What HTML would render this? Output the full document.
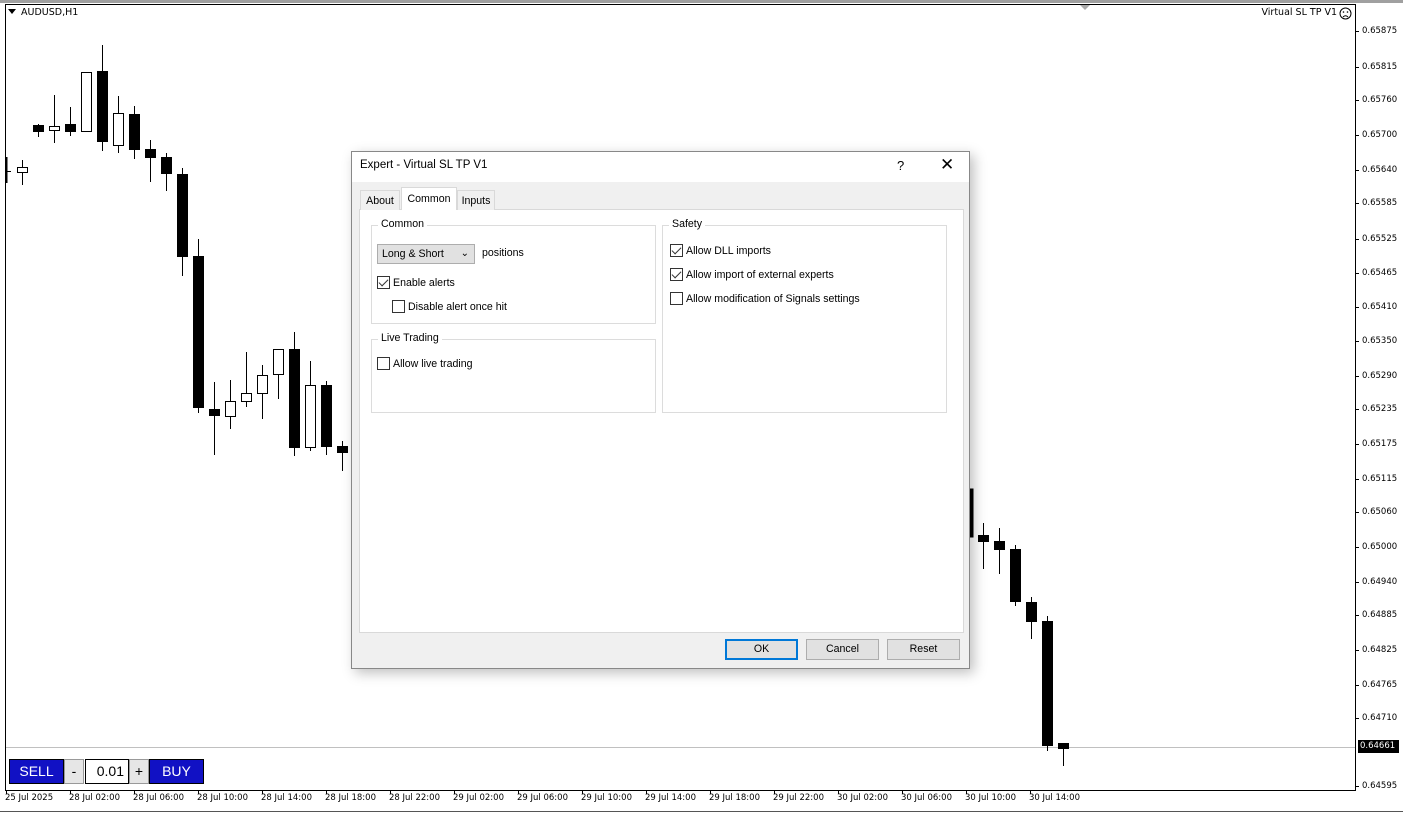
<!DOCTYPE html>
<html><head><meta charset="utf-8"><style>
*{margin:0;padding:0;box-sizing:border-box}
body{width:1403px;height:814px;background:#fff;position:relative;overflow:hidden;font-family:"Liberation Sans",sans-serif}
.abs{position:absolute}
.f{font-family:"DejaVu Sans","Liberation Sans",sans-serif}
.dlg{left:351px;top:151px;width:619px;height:518px;background:#f0f0f0;border:1px solid #888;box-shadow:4px 4px 12px rgba(0,0,0,.25)}
.dlg *{font-size:10.6px;color:#000}
.grp{border:1px solid #dcdcdc;position:absolute}
.grp .lg{position:absolute;top:-8px;left:6px;background:#fff;padding:0 3px}
.cb{position:absolute;width:13px;height:13px;border:1px solid #333;background:#fff}
.cb.c::after{content:"";position:absolute;left:3px;top:0px;width:4px;height:8px;border:solid #333;border-width:0 1.5px 1.5px 0;transform:rotate(45deg)}
.btn{position:absolute;top:487px;width:73px;height:21px;border:1px solid #adadad;background:#e1e1e1;text-align:center;line-height:19px}
</style></head><body>
<div class="abs" style="left:0;top:0;width:1403px;height:3px;background:#a0a0a0"></div>
<svg class="abs" style="left:0;top:0" width="1403" height="814">
<rect x="5.5" y="4.5" width="1350" height="786" fill="none" stroke="#000"/>
<line x1="6" y1="747.5" x2="1355" y2="747.5" stroke="#c0c0c0"/>
<polygon points="1080,5 1090,5 1085,10" fill="#aaa"/>
<line x1="0" y1="811.5" x2="1403" y2="811.5" stroke="#555"/>
<g id="c" stroke="#000" stroke-width="1"></g>
<path d="M8 9 L16 9 L12 14Z" fill="#000"/>
<rect x="1358" y="740" width="41" height="13" fill="#000"/>
</svg>
<div class="abs f" style="left:21px;top:7px;font-size:9.5px">AUDUSD,H1</div>
<div class="abs f" style="right:66px;top:7px;font-size:9.5px">Virtual SL TP V1</div>
<svg class="abs" style="left:1339px;top:7px" width="13" height="13"><circle cx="6.5" cy="6.5" r="5.5" fill="none" stroke="#000"/><circle cx="4.5" cy="5" r=".8"/><circle cx="8.5" cy="5" r=".8"/><path d="M4 10 Q6.5 7.5 9 10" fill="none" stroke="#000"/></svg>
<div id="pl"></div><div id="tl"></div>
<div class="abs" style="left:9px;top:759px;width:55px;height:25px;background:#1111c4;border:1px solid #000;color:#fff;font-size:14px;text-align:center;line-height:23px">SELL</div>
<div class="abs" style="left:64px;top:759px;width:20px;height:25px;background:#e6e6e6;border:1px solid #999;font-size:14px;text-align:center;line-height:23px">-</div>
<div class="abs" style="left:85px;top:759px;width:44px;height:25px;background:#fff;border:1px solid #000;font-size:14px;text-align:right;padding-right:4px;line-height:23px">0.01</div>
<div class="abs" style="left:129px;top:759px;width:20px;height:25px;background:#e6e6e6;border:1px solid #999;font-size:14px;text-align:center;line-height:23px">+</div>
<div class="abs" style="left:149px;top:759px;width:55px;height:25px;background:#1111c4;border:1px solid #000;color:#fff;font-size:14px;text-align:center;line-height:23px">BUY</div>

<div class="abs dlg">
 <div class="abs" style="left:0;top:0;width:617px;height:30px;background:#fff"></div>
 <div class="abs" style="left:8px;top:7px;font-size:11.5px">Expert - Virtual SL TP V1</div>
 <div class="abs" style="left:545px;top:6px;font-size:13px">?</div>
 <div class="abs" style="left:588px;top:3px;font-size:17px">✕</div>
 <div class="abs" style="left:7px;top:57px;width:605px;height:424px;background:#fff;border:1px solid #d9d9d9"></div>
 <div class="abs" style="left:8px;top:38px;width:40px;height:20px;border:1px solid #d9d9d9;border-bottom:none;text-align:center;line-height:20px;background:#f0f0f0">About</div>
 <div class="abs" style="left:49px;top:35px;width:56px;height:23px;border:1px solid #d9d9d9;border-bottom:none;background:#fff;text-align:center;line-height:22px">Common</div>
 <div class="abs" style="left:105px;top:38px;width:38px;height:20px;border:1px solid #d9d9d9;border-bottom:none;text-align:center;line-height:20px;background:#f0f0f0">Inputs</div>
 <div class="grp" style="left:19px;top:73px;width:285px;height:99px"><span class="lg">Common</span></div>
 <div class="abs" style="left:25px;top:92px;width:98px;height:20px;background:#e1e1e1;border:1px solid #adadad;padding-left:4px;line-height:18px">Long &amp; Short<span style="position:absolute;right:5px;top:0;font-size:10px">&#8964;</span></div>
 <div class="abs" style="left:130px;top:95px">positions</div>
 <div class="cb c" style="left:25px;top:124px"></div><div class="abs" style="left:41px;top:125px">Enable alerts</div>
 <div class="cb" style="left:40px;top:148px"></div><div class="abs" style="left:56px;top:149px">Disable alert once hit</div>
 <div class="grp" style="left:19px;top:187px;width:285px;height:74px"><span class="lg">Live Trading</span></div>
 <div class="cb" style="left:25px;top:205px"></div><div class="abs" style="left:41px;top:206px">Allow live trading</div>
 <div class="grp" style="left:310px;top:73px;width:285px;height:188px"><span class="lg">Safety</span></div>
 <div class="cb c" style="left:318px;top:92px"></div><div class="abs" style="left:334px;top:93px">Allow DLL imports</div>
 <div class="cb c" style="left:318px;top:116px"></div><div class="abs" style="left:334px;top:117px">Allow import of external experts</div>
 <div class="cb" style="left:318px;top:140px"></div><div class="abs" style="left:334px;top:141px">Allow modification of Signals settings</div>
 <div class="btn" style="left:373px;border:2px solid #0078d7;line-height:17px">OK</div>
 <div class="btn" style="left:454px">Cancel</div>
 <div class="btn" style="left:535px">Reset</div>
</div>
<script>
var C=[[22,160,185,167,172,0],[38,124,137,125,131,1],[54,95,143,126,130,0],[70,107,136,124,131,1],[86,72,131,72,131,0],[102,45,151,71,141,1],[118,96,153,113,145,0],[134,106,159,114,149,1],[150,140,182,149,157,1],[166,153,191,157,173,1],[182,168,276,174,256,1],[198,239,413,256,407,1],[214,382,455,409,415,1],[230,380,429,401,416,0],[246,352,407,393,401,0],[262,365,419,375,393,0],[278,349,399,349,374,0],[294,332,456,349,447,1],[310,361,451,385,447,0],[326,381,455,385,446,1],[342,441,471,446,452,1],[983,523,569,535,541,1],[999,528,574,541,549,1],[1015,545,606,549,601,1],[1031,597,639,602,621,1],[1047,616,751,621,745,1],[1063,743,766,743,748,1]];
var s='<line x1="6.5" y1="157" x2="6.5" y2="183" stroke="#000" stroke-width="2"/><line x1="6" y1="171.5" x2="11" y2="171.5"/><rect x="970" y="489" width="3" height="48" fill="#000"/>';
C.forEach(function(c){s+='<line x1="'+(c[0]+.5)+'" y1="'+c[1]+'" x2="'+(c[0]+.5)+'" y2="'+c[2]+'"/>';s+='<rect x="'+(c[0]-4.5)+'" y="'+(c[3]+.5)+'" width="10" height="'+Math.max(c[4]-c[3],1)+'" fill="'+(c[5]?'#000':'#fff')+'"/>';});
document.getElementById('c').innerHTML=s;
var P=[["0.65875",31],["0.65815",67],["0.65760",100],["0.65700",135],["0.65640",170],["0.65585",203],["0.65525",239],["0.65465",273],["0.65410",307],["0.65350",341],["0.65290",376],["0.65235",409],["0.65175",444],["0.65115",479],["0.65060",512],["0.65000",547],["0.64940",582],["0.64885",615],["0.64825",650],["0.64765",685],["0.64710",718],["0.64595",786]];
var h='';P.forEach(function(p){h+='<div class="abs f" style="left:1362px;top:'+(p[1]-5)+'px;font-size:8.5px">'+p[0]+'</div><div class="abs" style="left:1355px;top:'+p[1]+'px;width:4px;height:1px;background:#000"></div>';});
h+='<div class="abs f" style="left:1360px;top:741px;font-size:8.5px;color:#fff">0.64661</div>';
document.getElementById('pl').innerHTML=h;
var T=["25 Jul 2025","28 Jul 02:00","28 Jul 06:00","28 Jul 10:00","28 Jul 14:00","28 Jul 18:00","28 Jul 22:00","29 Jul 02:00","29 Jul 06:00","29 Jul 10:00","29 Jul 14:00","29 Jul 18:00","29 Jul 22:00","30 Jul 02:00","30 Jul 06:00","30 Jul 10:00","30 Jul 14:00"];
h='';T.forEach(function(t,i){var x=5+i*64;h+='<div class="abs f" style="left:'+x+'px;top:793px;font-size:8.5px">'+t+'</div><div class="abs" style="left:'+(x+1)+'px;top:790px;width:1px;height:4px;background:#000"></div>';});
document.getElementById('tl').innerHTML=h;
</script>
</body></html>
